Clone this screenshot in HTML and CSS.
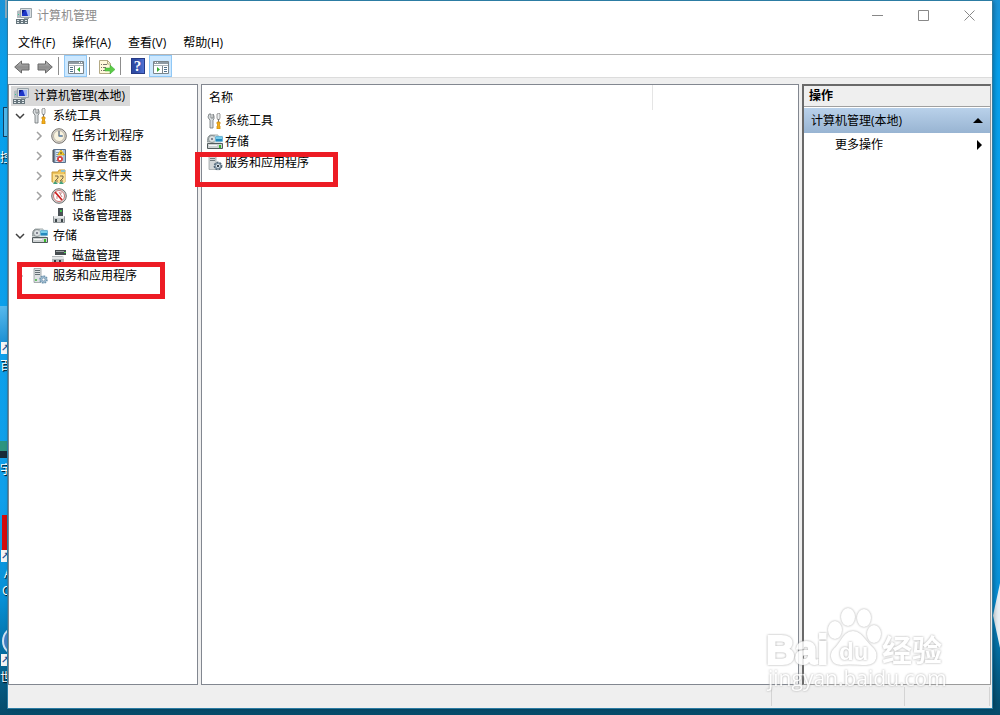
FILE: index.html
```html
<!DOCTYPE html>
<html lang="zh-CN">
<head>
<meta charset="utf-8">
<title>计算机管理</title>
<link rel="stylesheet" href="styles.css">
</head>
<body>
<svg class="defs" aria-hidden="true">
  <linearGradient id="metal" x1="0" y1="0" x2="0" y2="1"><stop offset="0" stop-color="#d4d8d9"/><stop offset="1" stop-color="#7c8486"/></linearGradient>
  <linearGradient id="arrowfill" x1="0" y1="0" x2="0" y2="1"><stop offset="0" stop-color="#c4c4c4"/><stop offset=".5" stop-color="#8e8e8e"/><stop offset="1" stop-color="#a8a8a8"/></linearGradient>
  <symbol id="i-computer" viewBox="0 0 16 16">
    <path d="M1 3l3-1v8H1z" fill="#b3bcc0"/><path d="M2 6h1v1H2z" fill="#3c9"/>
    <path d="M4.500 .5h11v9h-11z" fill="#d8dee1" stroke="#9aa4a9"/>
    <path d="M6 2h8v6H6z" fill="#1c35c8"/><path d="M10 2h4v6h-2z" fill="#9db4f5"/>
    <path d="M6 2h3L6 6z" fill="#0b1a83"/><path d="M8 10h5v1H8z" fill="#98a3a8"/>
    <path d="M0 11h12v5H0z" fill="#66757c"/><path d="M1 12h2v1H1zM5 12h2v1H5zM9 12h2v1H9zM1 14h2v1H1zM5 14h2v1H5zM9 14h2v1H9z" fill="#e3eaed"/>
  </symbol>
  <symbol id="i-tools" viewBox="0 0 16 16">
    <path d="M2 1L1 4l1 2 1 1v8h3V7l1-1V3L6 1v4H4V1z" fill="#d8dcde" stroke="#6e7577" stroke-width=".8"/>
    <path d="M10 1l2-1 1 1v4l-1 2h-1l-1-2z" fill="#eceeef" stroke="#777" stroke-width=".7"/>
    <path d="M11 6h1v3h-1z" fill="#777"/><path d="M10 9h3v2l-1 1 1 1v3h-3v-3l1-1-1-1z" fill="#f2ae18" stroke="#d08d10" stroke-width=".8"/>
  </symbol>
  <symbol id="i-clock" viewBox="0 0 16 16">
    <circle cx="8" cy="8" r="7.3" fill="#dcdad5" stroke="#77736d"/><circle cx="8" cy="8" r="5.5" fill="#f9f3df" stroke="#a89f90" stroke-width=".7"/>
    <path d="M8 3v5h4" fill="none" stroke="#526071" stroke-width="1.2"/><path d="M8 8h3" stroke="#598ac0" stroke-width="1.2"/>
  </symbol>
  <symbol id="i-events" viewBox="0 0 16 16">
    <path d="M2.500 1.500h12v13h-12z" fill="#a9c3dc" stroke="#5a718c"/><path d="M5 2h7v12H5z" fill="#dce7f1"/>
    <path d="M1 3h3M1 5h3M1 7h3M1 9h3M1 11h3M1 13h3" stroke="#46494d"/><path d="M5 4.500h3M5 6.500h2M5 8.500h2M5 12.500h2" stroke="#7f9cbe"/>
    <path d="M10 2l3.500 5h-7z" fill="#ffd42a" stroke="#b98c00" stroke-width=".6"/><path d="M10 4v2" stroke="#333"/>
    <circle cx="9" cy="11" r="3" fill="#d64848"/><path d="M8 10l2 2M10 10l-2 2" stroke="#fff"/>
  </symbol>
  <symbol id="i-share" viewBox="0 0 16 16">
    <path d="M1 4h6l1-2h6v12H1z" fill="#eec45c" stroke="#c79a38"/><path d="M2 6h12v8H2z" fill="#fadf91"/><path d="M10 2h4v2h-4z" fill="#8bc1cd"/>
    <path d="M4 8h3v2l-3 3h3M9 8h3v2l-3 3h3" fill="none" stroke="#7d6a48"/>
    <path d="M2 16l2-3 3 3zM8 16l2-3 3 3z" fill="#42a17d"/>
  </symbol>
  <symbol id="i-perf" viewBox="0 0 16 16">
    <circle cx="8" cy="8" r="7.3" fill="#d6d6d6" stroke="#6f6f6f"/><circle cx="8" cy="8" r="5.500" fill="#fff" stroke="#c77"/>
    <path d="M4 4l7 8" stroke="#ce1f1f" stroke-width="1.8"/><path d="M8 4l3 5M6 8v3M9 5h2" stroke="#a55" stroke-width=".7"/>
  </symbol>
  <symbol id="i-device" viewBox="0 0 16 16">
    <path d="M7 0h5v9H7z" fill="#4b5256"/><path d="M9 2h2v2H9z" fill="#3dc34b"/><path d="M2.500 8.500h11v6h-11z" fill="#c6cbcd" stroke="#8d9396"/>
    <path d="M3 8h10v2H3z" fill="#e8ebec"/><path d="M4 11h2v3H4zM10 11h2v3h-2z" fill="#3c4549"/>
  </symbol>
  <symbol id="i-storage" viewBox="0 0 16 16">
    <path d="M1 3l2-2h8l3 7H0z" fill="#b9bfc1" stroke="#7d8688" stroke-width=".7"/><circle cx="5" cy="5" r="3.500" fill="#dce1e2" stroke="#6d7779" stroke-width=".7"/><circle cx="5" cy="5" r="1" fill="#667"/>
    <path d="M8 2h8v6H8z" fill="#2489bd" stroke="#e2f3f8" stroke-width=".8"/><path d="M9 3h6v2H9z" fill="#78cdea"/>
    <path d="M.5 9.500h15v5H.5z" fill="#cdd1d2" stroke="#535c5e"/><path d="M2 11h8v1H2z" fill="#f7f8f8"/><path d="M12 11h2v3h-2z" fill="#36b82b"/>
  </symbol>
  <symbol id="i-disk" viewBox="0 0 16 16">
    <path d="M4 2h11v5H4z" fill="#464c4f"/><path d="M5 3h8v1H5z" fill="#9ba1a3"/><path d="M13 4h2v1h-2z" fill="#55d75b"/>
    <path d="M1 8h10l2 1v6H1z" fill="#b3b9bb"/><path d="M1 9h12v2H1z" fill="#e5e7e8"/><path d="M3 12h2v2H3zM8 12h2v2H8z" fill="#343c3f"/>
  </symbol>
  <symbol id="i-services" viewBox="0 0 16 16">
    <path d="M2 .500h7v14H2z" fill="#dde1e3" stroke="#939a9d" stroke-width=".8"/><path d="M3 2.500h5M3 4.500h5M3 6.500h5" stroke="#647075"/><path d="M3 11h2v2H3z" fill="#65bb63"/>
    <circle cx="11.500" cy="11.500" r="3.400" fill="#a9c4d8" stroke="#7095ae" stroke-width="1.800" stroke-dasharray="1.600 1"/><circle cx="11.500" cy="11.500" r="1.500" fill="#fff" stroke="#6387a0" stroke-width=".7"/>
  </symbol>
  <symbol id="i-services-dark" viewBox="0 0 16 16">
    <path d="M2 .5h7v14H2z" fill="#d2d6d8" stroke="#a0a6a8" stroke-width=".8"/><path d="M3 3.500h5M3 5.500h5" stroke="#727b80"/>
    <circle cx="11" cy="11" r="3.600" fill="#8c9fae" stroke="#566a7b" stroke-width="1.600" stroke-dasharray="2 1"/><circle cx="11" cy="11" r="1.600" fill="#222c36" stroke="#dbe5ed"/>
  </symbol>
  <symbol id="i-arrow" viewBox="0 0 16 16"><path d="M.7 8l6.800-6v3h7.500v6H7.500v3z" fill="url(#arrowfill)" stroke="#686868"/></symbol>
  <symbol id="i-pane" viewBox="0 0 16 16">
    <path d="M.5 2.500h15v12H.5z" fill="#fff" stroke="#7b858b"/><path d="M1 3h14v2H1z" fill="#8f9ba4"/><path d="M11 3.500h1M13 3.500h1" stroke="#fff"/>
    <path d="M1 6.500h14" stroke="#aeb6bb"/><path d="M6.500 7v7" stroke="#7b858b"/><path d="M2 8.500h3M2 10.500h3M2 12.500h3" stroke="#52718b"/><path d="M12 8v5L9 10.500z" fill="#35ad31"/>
  </symbol>
  <symbol id="i-export" viewBox="0 0 16 16">
    <path d="M.5 1.500h8l3 3v10H.5z" fill="#fff9dc" stroke="#b4aa85"/><path d="M8.500 1v4h3" fill="none" stroke="#b4aa85"/>
    <path d="M2 5.500h1M4 5.500h4M2 8.500h1M4 8.500h3M2 11.500h1M4 11.500h4" stroke="#77746a"/><path d="M6 9h5V6l5 4.500-5 4.500v-3H6z" fill="#5ccb47" stroke="#3bab35" stroke-width=".5"/>
  </symbol>
  <symbol id="i-chevron" viewBox="0 0 12 12"><path d="M4 2l4 4-4 4" fill="none" stroke="currentColor" stroke-width="1.500"/></symbol>
</svg>

<div class="desktop" aria-hidden="true">
  <span class="bin"></span><span class="tile panel"></span><span class="label l1">控</span>
  <span class="tile cloud"></span><span class="shortcut s1">↗</span><span class="label l2">百</span>
  <span class="tile monitor"></span><span class="label l3">宇</span>
  <span class="tile adobe"></span><span class="shortcut s2">↗</span><span class="label l4">A</span><span class="label l5">C</span>
  <span class="tile globe"></span><span class="shortcut s3">↗</span><span class="label l6">世</span>
  <span class="shine"></span>
</div>

<main class="window">
  <header class="titlebar">
    <svg class="icon"><use href="#i-computer"/></svg>
    <h1>计算机管理</h1>
    <div class="controls">
      <button aria-label="最小化"><svg viewBox="0 0 11 11"><path d="M0 5.500h11"/></svg></button>
      <button aria-label="最大化"><svg viewBox="0 0 11 11"><path d="M.5.5h10v10H.5z"/></svg></button>
      <button aria-label="关闭"><svg viewBox="0 0 11 11"><path d="M.5.5l10 10M10.500.5l-10 10"/></svg></button>
    </div>
  </header>
  <nav class="menu"><button>文件(F)</button><button>操作(A)</button><button>查看(V)</button><button>帮助(H)</button></nav>
  <div class="toolbar">
    <button aria-label="后退"><svg class="icon"><use href="#i-arrow"/></svg></button>
    <button aria-label="前进"><svg class="icon flip"><use href="#i-arrow"/></svg></button>
    <span class="sep"></span>
    <button class="on" aria-label="显示控制台树"><svg class="icon flip"><use href="#i-pane" class="flip-inner"/></svg></button>
    <span class="sep"></span>
    <button aria-label="导出列表"><svg class="icon"><use href="#i-export"/></svg></button>
    <span class="sep"></span>
    <button aria-label="帮助"><span class="help">?</span></button>
    <button class="on" aria-label="显示操作窗格"><svg class="icon flip"><use href="#i-pane"/></svg></button>
  </div>
  <div class="panes">
    <nav class="pane tree">
      <button class="row root"><svg class="icon"><use href="#i-computer"/></svg><span>计算机管理(本地)</span></button>
      <button class="row"><svg class="chev open"><use href="#i-chevron"/></svg><svg class="icon"><use href="#i-tools"/></svg><span>系统工具</span></button>
      <div class="children">
        <button class="row"><svg class="chev"><use href="#i-chevron"/></svg><svg class="icon"><use href="#i-clock"/></svg><span>任务计划程序</span></button>
        <button class="row"><svg class="chev"><use href="#i-chevron"/></svg><svg class="icon"><use href="#i-events"/></svg><span>事件查看器</span></button>
        <button class="row"><svg class="chev"><use href="#i-chevron"/></svg><svg class="icon"><use href="#i-share"/></svg><span>共享文件夹</span></button>
        <button class="row"><svg class="chev"><use href="#i-chevron"/></svg><svg class="icon"><use href="#i-perf"/></svg><span>性能</span></button>
        <button class="row"><svg class="chev"></svg><svg class="icon"><use href="#i-device"/></svg><span>设备管理器</span></button>
      </div>
      <button class="row"><svg class="chev open"><use href="#i-chevron"/></svg><svg class="icon"><use href="#i-storage"/></svg><span>存储</span></button>
      <div class="children">
        <button class="row"><svg class="chev"></svg><svg class="icon"><use href="#i-disk"/></svg><span>磁盘管理</span></button>
      </div>
      <button class="row"><svg class="chev"><use href="#i-chevron"/></svg><svg class="icon"><use href="#i-services"/></svg><span>服务和应用程序</span></button>
      <span class="mark mark-tree"></span>
    </nav>
    <section class="pane list">
      <table>
        <thead><tr><th class="name">名称</th><th></th></tr></thead>
        <tbody>
          <tr><td><span class="item"><svg class="icon"><use href="#i-tools"/></svg>系统工具</span></td><td></td></tr>
          <tr><td><span class="item"><svg class="icon"><use href="#i-storage"/></svg>存储</span></td><td></td></tr>
          <tr><td><span class="item"><svg class="icon"><use href="#i-services-dark"/></svg>服务和应用程序</span></td><td></td></tr>
        </tbody>
      </table>
      <span class="mark mark-list"></span>
    </section>
    <aside class="actions">
      <h2>操作</h2>
      <button class="group"><span>计算机管理(本地)</span><svg viewBox="0 0 10 5"><path d="M0 5l5-5 5 5z"/></svg></button>
      <button class="more"><span>更多操作</span><svg viewBox="0 0 5 10"><path d="M0 0l5 5-5 5z"/></svg></button>
    </aside>
  </div>
  <footer class="status"><span></span><span></span><span></span></footer>
  <svg class="watermark" viewBox="0 0 190 90" aria-hidden="true">
    <text class="wm-bai" x="4" y="60">Bai</text>
    <ellipse cx="73" cy="26" rx="6" ry="8"/><ellipse cx="86" cy="13" rx="6" ry="8"/><ellipse cx="102" cy="14" rx="6" ry="8"/><ellipse cx="112" cy="30" rx="6" ry="8"/>
    <path d="M91 28c8 0 12 10 18 15 7 6 6 17-5 17-8 0-18-1-25 0-9 0-12-9-6-15 7-6 9-17 18-17z"/>
    <text class="wm-du" x="77" y="56">du</text>
    <text class="wm-cn" x="120" y="57">经验</text>
    <text class="wm-url" x="6" y="82">jingyan.baidu.com</text>
  </svg>
</main>
</body>
</html>
```
FILE: styles.css
```css
* { box-sizing: border-box; }

body {
  margin: 0;
  height: 100vh;
  padding: 1px 8px 7px;
  overflow: hidden;
  background: linear-gradient(#1b94d8 0, #07a0ec 10%, #109fea 70%, #078fd5 84%, #04608c 94%, #064a69 100%);
  font: 12px/20px "Open Sans", "Noto Sans CJK SC", sans-serif;
  color: #000;
}

button {
  margin: 0;
  padding: 0;
  border: 0;
  background: none;
  font: inherit;
  color: inherit;
}

svg { flex: none; display: block; }
.defs { position: absolute; width: 0; height: 0; }
.icon { width: 16px; height: 16px; }
.flip { transform: scaleX(-1); }
.flip-inner { transform: scaleX(-1); transform-origin: 8px 8px; }

/* Desktop behind the window */
.desktop { position: absolute; inset: 0; overflow: hidden; }
.desktop span { position: absolute; }
.bin { left: 5px; top: 0; width: 4px; height: 18px; background: #86a9bd; }
.tile { left: 0; width: 8px; }
.panel { left: 3px; top: 107px; height: 30px; border: 1px solid #123e60; background: #50b8ec; }
.cloud { top: 306px; height: 36px; background: linear-gradient(#58b9ed, #1e91d4); }
.monitor { top: 441px; height: 17px; background: linear-gradient(#2d9480 60%, #182a38 60%); }
.adobe { left: 2px; top: 515px; height: 35px; background: #d40b0b; }
.globe { left: 2px; top: 626px; width: 30px; height: 30px; border: 2px solid #cfe2f2; border-radius: 50%; background: #477fc4; }
.shortcut { left: 1px; width: 10px; height: 12px; background: #f4f4f4; color: #1d4f94; font: bold 10px/12px "DejaVu Sans", sans-serif; }
.s1 { top: 342px; }
.s2 { top: 550px; }
.s3 { top: 654px; }
.label { left: 0; color: #fff; text-shadow: 1px 1px 1px #000; }
.l1 { top: 148px; }
.l2 { top: 356px; }
.l3 { top: 460px; }
.l4 { left: 4px; top: 564px; }
.l5 { left: 2px; top: 581px; }
.l6 { top: 668px; }
.shine { right: 0; top: 583px; width: 7px; height: 65px; background: #e8f0f5; clip-path: polygon(100% 0, 100% 100%, 0 50%); }

/* Window */
.window {
  position: relative;
  display: flex;
  flex-direction: column;
  height: 100%;
  background: #efefef;
  box-shadow: 0 0 0 1px #2c7ca3, 2px 0 5px #0005;
}

.titlebar { display: flex; align-items: center; height: 29px; padding-left: 8px; gap: 5px; background: #fff; }
.titlebar h1 { margin: 0; font-size: 12px; font-weight: 400; color: #8c8c8c; }
.controls { display: flex; margin-left: auto; }
.controls button { display: grid; place-items: center; width: 46px; height: 29px; }
.controls svg { width: 11px; height: 11px; fill: none; stroke: #888; }

.menu { display: flex; gap: 17px; height: 25px; padding: 2px 10px 0; background: #fff; border-bottom: 1px solid #b4b4b4; }

.toolbar { display: flex; align-items: center; height: 23px; padding-left: 2px; background: #fff; border-bottom: 1px solid #dcdcdc; }
.toolbar button { display: grid; place-items: center; width: 23px; height: 22px; }
.toolbar .icon { margin-top: 2px; }
.toolbar .on { border: 1px solid #90c8f6; background: #cce8ff; }
.sep { width: 1px; height: 18px; margin: 0 5px 0 2px; background: #8d8d8d; }
.help { width: 14px; height: 16px; border: 1px solid #263a85; background: linear-gradient(90deg, #2e4aa3 30%, #4f73d6); color: #fff; font: bold 15px/14px "Liberation Serif", serif; text-align: center; }

.panes { flex: 1; display: flex; gap: 3px; min-height: 0; padding-top: 6px; }
.pane { position: relative; background: #fff; border: 1px solid #828790; }
.tree { width: 190px; padding: 1px 2px; }
.row { display: flex; align-items: center; height: 20px; padding-right: 4px; white-space: nowrap; }
.row .icon { margin-right: 5px; }
.root { padding: 0 5px 0 2px; background: #d9d9d9; }
.chev { width: 12px; height: 12px; margin: 0 6px 0 3px; color: #a0a0a0; }
.open { color: #404040; transform: rotate(90deg); }
.children { padding-left: 19px; }

.list { flex: 1; min-width: 0; }
table { width: 100%; border-collapse: collapse; table-layout: fixed; }
th { height: 25px; padding: 0 7px; font-weight: 400; text-align: left; }
.name { width: 450px; border-right: 1px solid #e5e5e5; }
td { height: 21px; padding: 0 5px; }
.item { display: flex; align-items: center; gap: 2px; white-space: nowrap; }

.mark { position: absolute; border: 5px solid #ed1c24; }
.mark-tree { left: 8px; top: 177px; width: 148px; height: 37px; }
.mark-list { left: -7px; top: 67px; width: 143px; height: 35px; }

.actions { width: 189px; margin-right: 1px; border: 1px solid #9b9b9b; border-top: 2px solid #696969; border-left: 2px solid #696969; background: #fff; }
.actions h2 { height: 21px; margin: 0; padding-left: 5px; border-bottom: 1px solid #a0a0a0; background: #efefef; font-size: 12px; line-height: 20px; }
.actions button { display: flex; align-items: center; justify-content: space-between; width: 100%; height: 25px; }
.group { margin-top: 1px; background: linear-gradient(#b9d1ea, #98b4d2); }
.actions .group { padding: 0 7px; }
.actions .more { height: 23px; padding: 0 8px 0 31px; }
.group svg { width: 10px; height: 5px; }
.more svg { width: 5px; height: 10px; }

.status { display: flex; justify-content: flex-end; height: 23px; padding: 2px; }
.status span { width: 133px; border-left: 1px solid #d4d4d4; }
.status span:nth-child(2) { width: 85px; }
.status span:last-child { width: 1px; }

.watermark { position: absolute; right: 40px; bottom: 14px; width: 190px; height: 90px; fill: #fff; stroke: #fff; stroke-width: 2px; opacity: .85; }
.watermark > * { filter: drop-shadow(0 0 1px #999); }
.wm-bai { font: bold 40px "Liberation Sans", sans-serif; }
.wm-du { font: bold 24px "Liberation Sans", sans-serif; stroke-width: 0; }
.wm-cn { font: bold 30px "Noto Sans CJK SC", sans-serif; stroke-width: 0; }
.wm-url { font: 21px "Open Sans", sans-serif; stroke-width: 0; }
```
